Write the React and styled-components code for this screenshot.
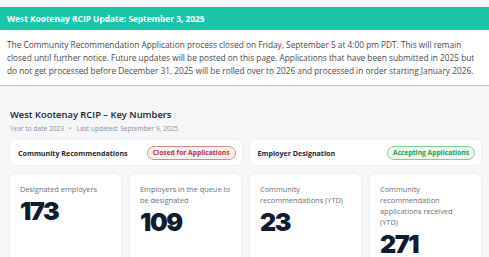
import React from "react";
import styled, { createGlobalStyle } from "styled-components";

const Global = createGlobalStyle`
  html, body { margin: 0; padding: 0; }
  body {
    background: #f5f6f8;
    font-family: "Open Sans", "Noto Sans", sans-serif;
    color: #333;
  }
`;

const Page = styled.div`
  padding-top: 7px;
`;

const Notice = styled.section`
  background: #ffffff;
  border-bottom: 1px solid #7fd9c8;
`;

const NoticeHeader = styled.div`
  background: #18c6aa;
  color: #ffffff;
  font-weight: 700;
  font-size: 8.4px;
  line-height: 23px;
  padding: 0 7px;
`;

const NoticeBody = styled.p`
  margin: 0;
  padding: 8px 7px;
  font-size: 8.3px;
  line-height: 13px;
  color: #4a4a4a;
`;

const Section = styled.section`
  padding: 22px 8px 0 10px;
`;

const Title = styled.h2`
  margin: 0;
  font-size: 9.4px;
  line-height: 14px;
  font-weight: 600;
  color: #1f2430;
`;

const Meta = styled.div`
  margin-top: 2px;
  font-size: 6.6px;
  line-height: 10px;
  color: #8a8f98;
  display: flex;
  gap: 5px;
`;

const StatusRow = styled.div`
  margin-top: 6px;
  display: grid;
  grid-template-columns: 1fr 1fr;
  gap: 8px;
`;

const StatusCard = styled.div`
  height: 25px;
  background: #ffffff;
  border-radius: 5px;
  box-shadow: 0 0 3px rgba(0, 0, 0, 0.06);
  display: flex;
  align-items: center;
  justify-content: space-between;
  padding: 0 6px 0 8px;
`;

const StatusLabel = styled.span`
  font-size: 7.1px;
  font-weight: 700;
  color: #222831;
`;

const Badge = styled.span`
  height: 12px;
  display: inline-flex;
  align-items: center;
  padding: 0 5px;
  border-radius: 8px;
  font-size: 6.7px;
  font-weight: 700;
  border: 1px solid ${(p) => (p.$tone === "open" ? "#7fcf95" : "#d88a8a")};
  background: ${(p) => (p.$tone === "open" ? "#eaf8ee" : "#fdeeee")};
  color: ${(p) => (p.$tone === "open" ? "#2f9a52" : "#b23a3a")};
`;

const StatGrid = styled.div`
  margin-top: 9px;
  display: grid;
  grid-template-columns: repeat(4, 111px);
  gap: 9px;
`;

const StatCard = styled.div`
  background: #ffffff;
  border-radius: 6px;
  box-shadow: 0 0 3px rgba(0, 0, 0, 0.06);
  padding: 10px 10px 0 10px;
  height: 100px;
`;

const StatLabel = styled.div`
  font-size: 7.4px;
  line-height: 11px;
  color: #6b6f76;
`;

const StatValue = styled.div`
  margin-top: 2px;
  font-family: "Inter", "Open Sans", sans-serif;
  font-weight: 900;
  font-size: 25px;
  line-height: 28px;
  letter-spacing: -1.4px;
  color: #121a2e;
`;

const stats = [
  { label: "Designated employers", value: "173" },
  { label: "Employers in the queue to be designated", value: "109" },
  { label: "Community recommendations (YTD)", value: "23" },
  { label: "Community recommendation applications received (YTD)", value: "271" },
];

export default function App() {
  return (
    <>
      <Global />
      <Page>
        <Notice>
          <NoticeHeader>West Kootenay RCIP Update: September 3, 2025</NoticeHeader>
          <NoticeBody>
            The Community Recommendation Application process closed on Friday, September 5 at 4:00 pm PDT. This will remain
            closed until further notice. Future updates will be posted on this page. Applications that have been submitted in 2025 but
            do not get processed before December 31, 2025 will be rolled over to 2026 and processed in order starting January 2026.
          </NoticeBody>
        </Notice>
        <Section>
          <Title>West Kootenay RCIP – Key Numbers</Title>
          <Meta>
            <span>Year to date 2023</span>
            <span>•</span>
            <span>Last updated: September 9, 2025</span>
          </Meta>
          <StatusRow>
            <StatusCard>
              <StatusLabel>Community Recommendations</StatusLabel>
              <Badge $tone="closed">Closed for Applications</Badge>
            </StatusCard>
            <StatusCard>
              <StatusLabel>Employer Designation</StatusLabel>
              <Badge $tone="open">Accepting Applications</Badge>
            </StatusCard>
          </StatusRow>
          <StatGrid>
            {stats.map((s) => (
              <StatCard key={s.value}>
                <StatLabel>{s.label}</StatLabel>
                <StatValue>{s.value}</StatValue>
              </StatCard>
            ))}
          </StatGrid>
        </Section>
      </Page>
    </>
  );
}
